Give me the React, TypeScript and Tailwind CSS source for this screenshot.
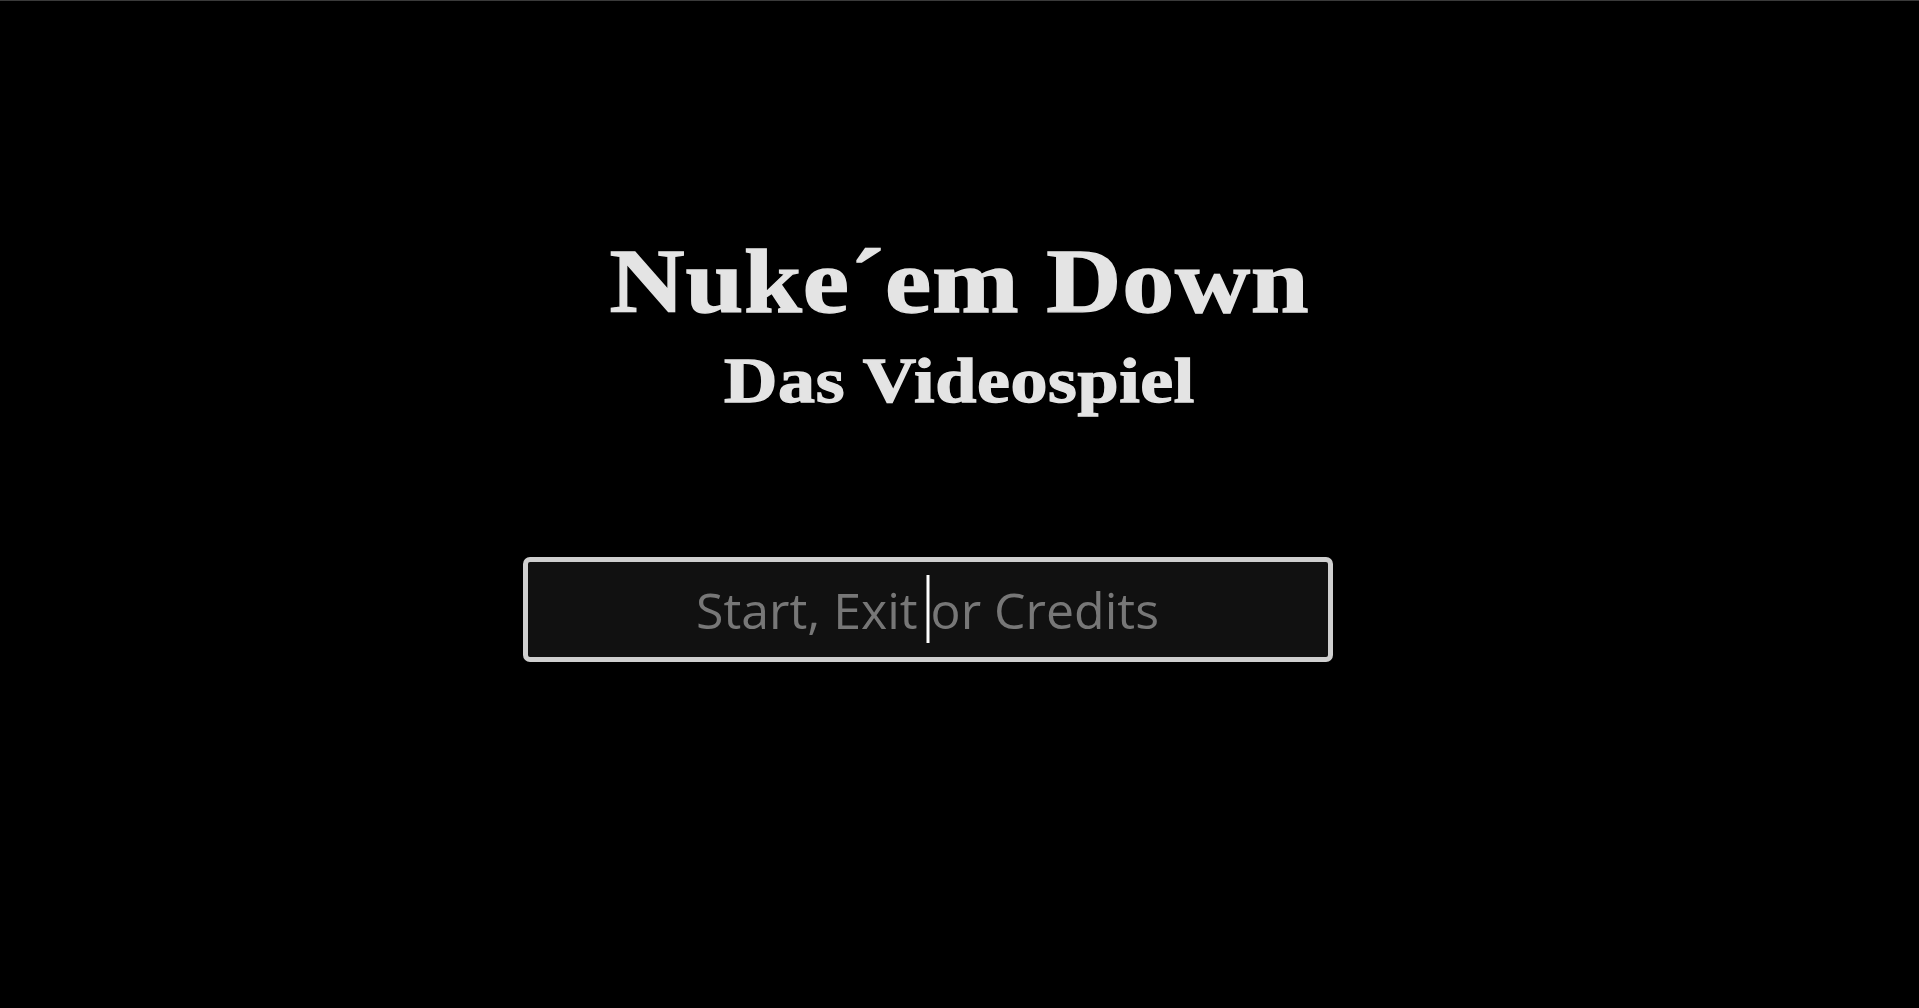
import { useState } from 'react'

export default function App() {
  const [cmd, setCmd] = useState('')

  return (
    <div className="min-h-screen h-[1008px] bg-black border-t border-[#3a3a3a] overflow-hidden">
      <main className="flex flex-col items-center pt-[228px]">
        <h1 className="font-['Liberation_Serif','Times_New_Roman',serif] font-bold text-[104px] leading-none tracking-[0.8px] text-[#e4e4e4] [-webkit-text-stroke:1.5px_#e4e4e4] scale-y-[0.885]">
          Nuke´em Down
        </h1>
        <h2 className="mt-[10px] font-['Liberation_Serif','Times_New_Roman',serif] font-bold text-[74px] leading-none tracking-[0.6px] text-[#e4e4e4] [-webkit-text-stroke:1.5px_#e4e4e4] scale-y-[0.87]">
          Das Videospiel
        </h2>

        <div className="relative mt-[140px] mr-16">
          <input
            value={cmd}
            onChange={(e) => setCmd(e.target.value)}
            placeholder="Start, Exit or Credits"
            className="block w-[810px] h-[105px] rounded-[7px] border-[5px] border-[#cfcfcf] bg-[#111111] text-center font-['Open_Sans','Noto_Sans',sans-serif] text-[50px] text-[#e4e4e4] placeholder:text-[#777777] caret-transparent outline-none"
          />
          {cmd === '' && (
            <span className="pointer-events-none absolute left-1/2 top-[18px] h-[68px] w-[3px] -translate-x-1/2 bg-white" />
          )}
        </div>
      </main>
    </div>
  )
}
